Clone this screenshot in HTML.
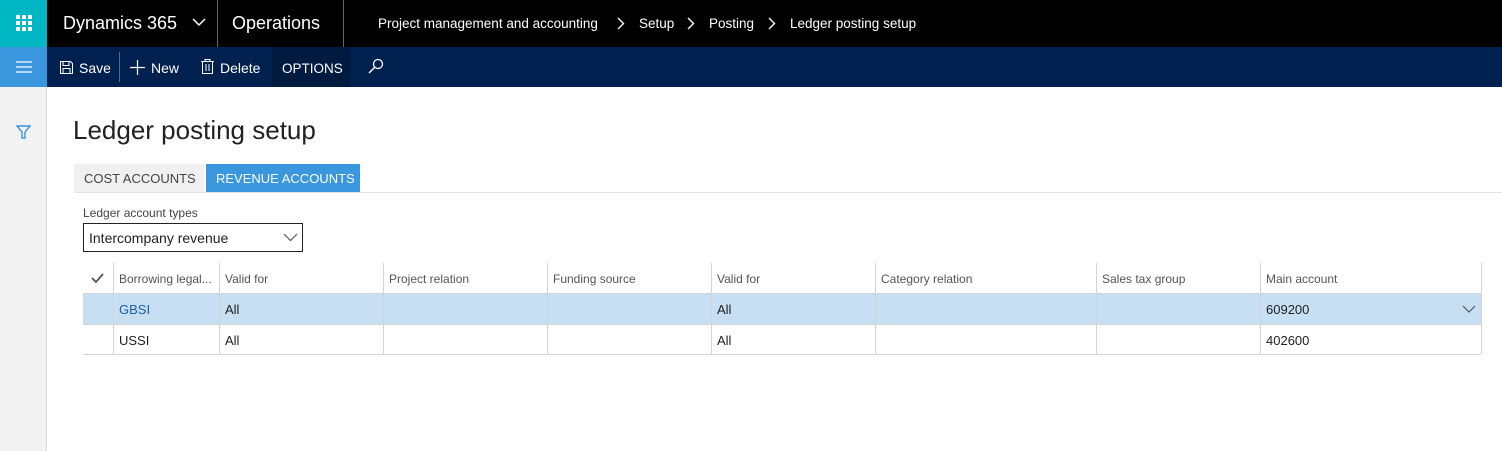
<!DOCTYPE html><html><head><style>
*{margin:0;padding:0;box-sizing:border-box}
body{width:1502px;height:451px;overflow:hidden;background:#fff;font-family:"Liberation Sans",sans-serif;position:relative;color:#212121}
.a{position:absolute;white-space:nowrap}
.top{left:0;top:0;width:1502px;height:47px;background:#000;color:#fff}
.bar{left:0;top:47px;width:1502px;height:40px;background:#002050;color:#fff;font-size:14px}
.vl{position:absolute;width:1px;background:#d4d4d4}
.hl{position:absolute;height:1px;background:#d4d4d4}
.hd{position:absolute;top:272px;font-size:12px;color:#555;white-space:nowrap}
.r1{position:absolute;top:302px;font-size:13px}
.r2{position:absolute;top:333px;font-size:13px}
.bc{position:absolute;top:16px;font-size:14px;white-space:nowrap}
</style></head><body>
<div class="a top">
 <div class="a" style="left:0;top:0;width:47px;height:47px;background:#00b7c3"></div>
 <svg class="a" style="left:16px;top:15px" width="16" height="16"><g fill="#fff"><rect x="0" y="0" width="4" height="4"/><rect x="6" y="0" width="4" height="4"/><rect x="12" y="0" width="4" height="4"/><rect x="0" y="6" width="4" height="4"/><rect x="6" y="6" width="4" height="4"/><rect x="12" y="6" width="4" height="4"/><rect x="0" y="12" width="4" height="4"/><rect x="6" y="12" width="4" height="4"/><rect x="12" y="12" width="4" height="4"/></g></svg>
 <div class="a" style="left:63px;top:13px;font-size:18px">Dynamics 365</div>
 <svg class="a" style="left:192px;top:17px" width="14" height="10"><path d="M1 2l6 6 6-6" stroke="#fff" stroke-width="1.5" fill="none"/></svg>
 <div class="a" style="left:217px;top:0;width:1px;height:47px;background:#666"></div>
 <div class="a" style="left:232px;top:13px;font-size:18px">Operations</div>
 <div class="a" style="left:343px;top:0;width:1px;height:47px;background:#666"></div>
 <div class="bc" style="left:378px;font-size:13.5px">Project management and accounting</div>
 <svg class="a" style="left:617px;top:17px" width="8" height="13"><path d="M1 1l5.5 5.5L1 12" stroke="#fff" stroke-width="1.4" fill="none"/></svg>
 <div class="bc" style="left:639px;font-size:13.5px">Setup</div>
 <svg class="a" style="left:687px;top:17px" width="8" height="13"><path d="M1 1l5.5 5.5L1 12" stroke="#fff" stroke-width="1.4" fill="none"/></svg>
 <div class="bc" style="left:709px;font-size:13.5px">Posting</div>
 <svg class="a" style="left:768px;top:17px" width="8" height="13"><path d="M1 1l5.5 5.5L1 12" stroke="#fff" stroke-width="1.4" fill="none"/></svg>
 <div class="bc" style="left:790px;font-size:13.5px">Ledger posting setup</div>
</div>
<div class="a bar">
 <div class="a" style="left:0;top:0;width:47px;height:40px;background:#3a96dd"></div>
 <svg class="a" style="left:16px;top:14px" width="16" height="12"><path d="M0 1h16M0 6h16M0 11h16" stroke="#fff" stroke-width="1.3"/></svg>
 <svg class="a" style="left:60px;top:14px" width="13" height="13"><path d="M.5.5h10l2 2v10H.5z M3 .5v4h6v-4 M3 12.5v-5h7v5" stroke="#fff" fill="none"/></svg>
 <div class="a" style="left:79px;top:13px">Save</div>
 <div class="a" style="left:119px;top:5px;width:1px;height:30px;background:#4a6a9a"></div>
 <svg class="a" style="left:130px;top:13px" width="15" height="15"><path d="M7.5 0v15M0 7.5h15" stroke="#fff" stroke-width="1.2"/></svg>
 <div class="a" style="left:151px;top:13px">New</div>
 <svg class="a" style="left:201px;top:12px" width="13" height="15"><path d="M0 2.5h13M4 2.5V.5h5v2M1.5 2.5v12h10v-12M5 5v7M8 5v7" stroke="#fff" fill="none"/></svg>
 <div class="a" style="left:220px;top:13px">Delete</div>
 <div class="a" style="left:272px;top:0;width:78px;height:40px;background:#001a40"></div>
 <div class="a" style="left:282px;top:14px;font-size:13.5px">OPTIONS</div>
 <svg class="a" style="left:368px;top:11px" width="16" height="16"><circle cx="10" cy="6" r="4.5" stroke="#fff" fill="none" stroke-width="1.3"/><path d="M7 9L1 15" stroke="#fff" stroke-width="1.5"/></svg>
</div>
<div class="a" style="left:0;top:87px;width:47px;height:364px;background:#f2f2f2;border-right:1px solid #d8d8d8"></div>
<svg class="a" style="left:16px;top:125px" width="15" height="14"><path d="M1 1h13L9 7v6H6V7z" stroke="#3a96dd" fill="none" stroke-width="1.4"/></svg>
<div class="a" style="left:73px;top:115px;font-size:26px;color:#222">Ledger posting setup</div>
<div class="a" style="left:74px;top:164px;width:130px;height:29px;background:#f0f0f0;font-size:13px;color:#444;padding:7px 0 0 10px">COST ACCOUNTS</div>
<div class="a" style="left:206px;top:164px;width:154px;height:29px;background:#3a96dd;font-size:13px;color:#fff;padding:7px 0 0 10px">REVENUE ACCOUNTS</div>
<div class="hl" style="left:74px;top:192px;width:1428px;background:#e4e4e4"></div>
<div class="a" style="left:83px;top:206px;font-size:12px;color:#444">Ledger account types</div>
<div class="a" style="left:83px;top:223px;width:220px;height:29px;border:1px solid #222;font-size:14px;padding:6px 0 0 5px">Intercompany revenue</div>
<svg class="a" style="left:283px;top:233px" width="15" height="9"><path d="M1 1l6.5 6.5L14 1" stroke="#555" fill="none" stroke-width="1.2"/></svg>
<div class="a" style="left:83px;top:294px;width:1398px;height:30px;background:#c6dff3"></div>
<svg class="a" style="left:91px;top:273px" width="13" height="10"><path d="M1 5l4 4 7-8" stroke="#555" fill="none" stroke-width="1.8"/></svg>
<div class="hl" style="left:83px;top:293px;width:1398px"></div>
<div class="hl" style="left:83px;top:324px;width:1398px"></div>
<div class="hl" style="left:83px;top:354px;width:1398px"></div>
<div class="vl" style="left:113px;top:263px;height:91px"></div>
<div class="vl" style="left:219px;top:263px;height:91px"></div>
<div class="vl" style="left:383px;top:263px;height:91px"></div>
<div class="vl" style="left:547px;top:263px;height:91px"></div>
<div class="vl" style="left:711px;top:263px;height:91px"></div>
<div class="vl" style="left:875px;top:263px;height:91px"></div>
<div class="vl" style="left:1096px;top:263px;height:91px"></div>
<div class="vl" style="left:1260px;top:263px;height:91px"></div>
<div class="vl" style="left:1481px;top:263px;height:91px"></div>
<div class="hd" style="left:119px">Borrowing legal...</div>
<div class="hd" style="left:225px">Valid for</div>
<div class="hd" style="left:389px">Project relation</div>
<div class="hd" style="left:553px">Funding source</div>
<div class="hd" style="left:717px">Valid for</div>
<div class="hd" style="left:881px">Category relation</div>
<div class="hd" style="left:1102px">Sales tax group</div>
<div class="hd" style="left:1266px">Main account</div>
<div class="r1" style="left:119px;color:#1a5e9e">GBSI</div>
<div class="r1" style="left:225px">All</div>
<div class="r1" style="left:717px">All</div>
<div class="r1" style="left:1266px">609200</div>
<svg class="a" style="left:1462px;top:305px" width="14" height="8"><path d="M1 1l6 6 6-6" stroke="#555" fill="none" stroke-width="1.2"/></svg>
<div class="r2" style="left:119px">USSI</div>
<div class="r2" style="left:225px">All</div>
<div class="r2" style="left:717px">All</div>
<div class="r2" style="left:1266px">402600</div>
</body></html>
